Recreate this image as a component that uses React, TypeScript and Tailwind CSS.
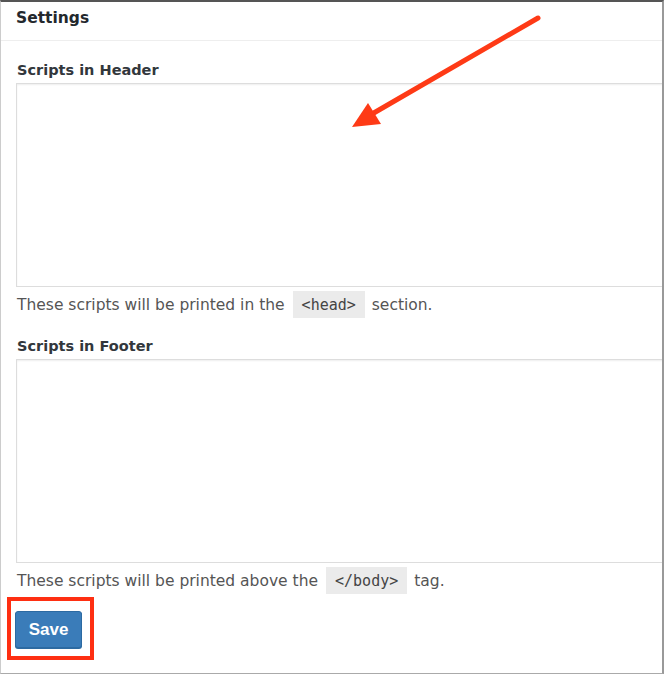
const SANS = "font-['DejaVu_Sans',sans-serif]";

function HelpText({ before, code, after }: { before: string; code: string; after: string }) {
  return (
    <div className={`mt-[4px] flex h-[27px] items-center pl-[16px] text-[15.5px] text-[#555] ${SANS}`}>
      <span className="pt-[2px]">{before}</span>
      <code className="ml-[8px] mr-[7px] flex h-[27px] items-center bg-[#ebebeb] px-[9px] pt-[1px] font-['DejaVu_Sans_Mono',monospace] text-[15px] text-[#444]">
        {code}
      </code>
      <span className="pt-[2px]">{after}</span>
    </div>
  );
}

function Field({ label, gap }: { label: string; gap: string }) {
  return (
    <>
      <div className={`${gap} flex h-[20px] items-center pl-[16px] text-[14.5px] font-bold text-[#32373c] ${SANS}`}>
        {label}
      </div>
      <textarea className="mt-[2px] ml-[15px] block h-[204px] w-[680px] resize-none border border-[#ddd] bg-white shadow-[inset_0_1px_2px_rgba(0,0,0,0.07)] outline-none" />
    </>
  );
}

export default function App() {
  return (
    <div className="relative h-[675px] w-[666px] bg-white">
      <div className="h-[674px] w-[664px] overflow-hidden border-t-2 border-r-2 border-b border-l border-t-[#555] border-r-[#999] border-b-[#aaa] border-l-[#ccc] bg-white">
        <div className={`flex h-[39px] items-center border-b border-[#eee] pb-[4px] pl-[15px] text-[15.5px] font-bold text-[#23282d] ${SANS}`}>
          Settings
        </div>

        <Field label="Scripts in Header" gap="mt-[20px]" />
        <HelpText before="These scripts will be printed in the" code="<head>" after="section." />

        <Field label="Scripts in Footer" gap="mt-[19px]" />
        <HelpText before="These scripts will be printed above the" code="</body>" after="tag." />

        <div className="mt-[3px] ml-[6px] inline-block border-4 border-[#fe2f12] pt-[10px] pr-[8px] pb-[8px] pl-[4px]">
          <button className="flex h-[37px] w-[67px] items-center justify-center rounded-[3px] border border-[#2c6aa2] bg-[#3a7cb9] font-['Liberation_Sans',sans-serif] text-[17px] font-bold text-white shadow-[0_1px_0_#2c6aa2]">
            Save
          </button>
        </div>
      </div>

      {/* annotation arrow */}
      <svg className="pointer-events-none absolute top-0 left-0" width="666" height="675" viewBox="0 0 666 675">
        <line x1="538" y1="18" x2="372" y2="114" stroke="#fe3a16" strokeWidth="5" strokeLinecap="round" />
        <polygon points="352,127 368,103 381,124" fill="#fe3a16" />
      </svg>
    </div>
  );
}
